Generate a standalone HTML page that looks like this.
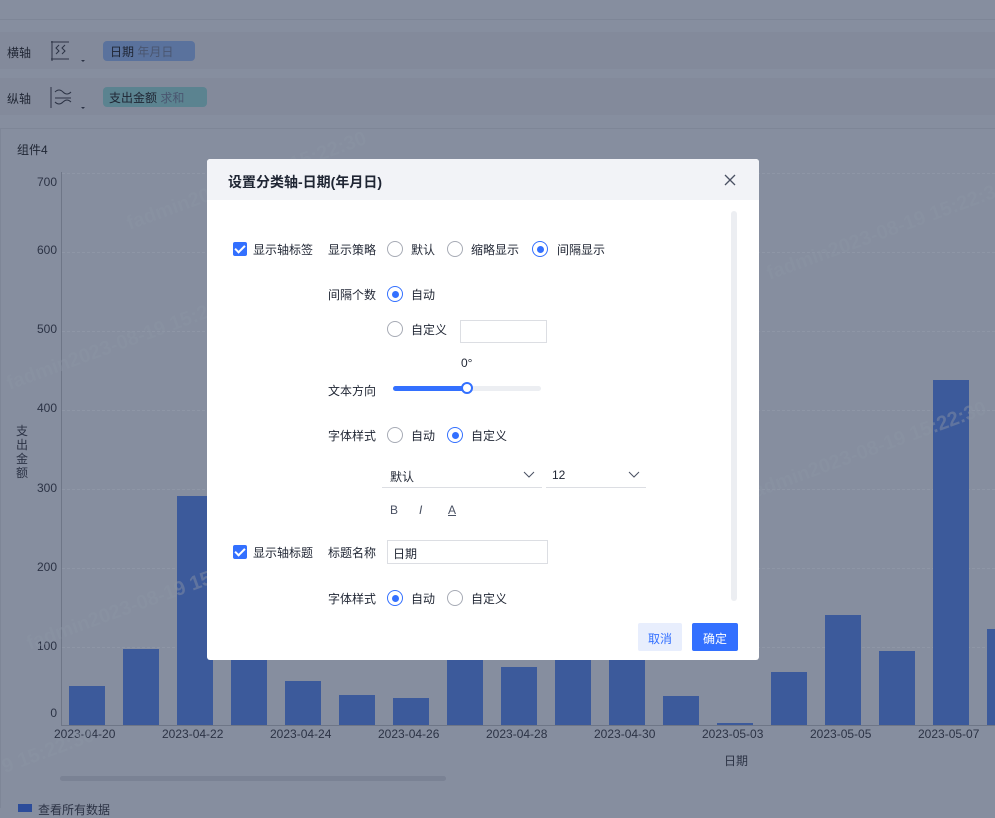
<!DOCTYPE html>
<html><head><meta charset="utf-8"><style>
*{box-sizing:border-box;margin:0;padding:0}
body{width:995px;height:808px;overflow:hidden;background:#868e9f;font-family:"Liberation Sans","Noto Sans CJK SC",sans-serif;font-size:12px;color:#1f2533;position:relative}
.a{position:absolute}
.wm{position:absolute;color:rgba(140,148,165,.45);font-size:20px;font-weight:bold;transform:rotate(-20deg);white-space:nowrap}
.bar{position:absolute;background:#3c5a9b;width:36px;bottom:83px}
.yl{position:absolute;right:938px;color:#2c3345;font-size:12px}
.xl{position:absolute;top:727px;color:#2c3345;font-size:12px}
.grid{position:absolute;left:62px;right:0;border-top:1px dashed #8e96a6}
.dlg{position:absolute;left:207px;top:159px;width:552px;height:501px;background:#fff;border-radius:3px;overflow:hidden}
.hd{height:41px;background:#f2f3f7;padding:13px 0 0 21px;font-size:14px;font-weight:bold;color:#1f2533}
.t{position:absolute;font-size:12px;color:#1f2533;white-space:nowrap}
.r{position:absolute;width:16px;height:16px;border:1px solid #a7abb5;border-radius:50%}
.r.on{border-color:#3370ff}
.r.on:after{content:"";position:absolute;left:3.5px;top:3.5px;width:7px;height:7px;border-radius:50%;background:#3370ff}
.cb{position:absolute;width:14px;height:14px;background:#3370ff;border-radius:2px}
.cb:after{content:"";position:absolute;left:4px;top:1px;width:4px;height:8px;border:solid #fff;border-width:0 2px 2px 0;transform:rotate(45deg)}
</style></head><body>
<div class="a" style="left:0;top:19px;width:995px;height:1px;background:#7e8697"></div>
<div class="a" style="left:0;top:32px;width:995px;height:37px;background:#838a9b"></div>
<div class="a" style="left:0;top:78px;width:995px;height:37px;background:#838a9b"></div>
<div class="t" style="left:7px;top:44px">横轴</div>
<div class="t" style="left:7px;top:90px">纵轴</div>
<svg class="a" style="left:49px;top:40px" width="40" height="28"><path d="M2 2h18M2 19h18M3 1v20M10 5l-3 3 3 3-3 3M16 5l-3 3 3 3-3 3" stroke="#2c3345" fill="none"/><path d="M32 20l2 2 2-2z" fill="#2c3345"/></svg>
<svg class="a" style="left:49px;top:86px" width="40" height="28"><path d="M2 1v21M6 6q4-4 8 0t8 0M6 12h16M6 16q4 4 8 0t8 0" stroke="#2c3345" fill="none"/><path d="M32 21l2 2 2-2z" fill="#2c3345"/></svg>
<div class="a" style="left:103px;top:41px;width:92px;height:20px;background:#5a729d;border-radius:4px;padding:2px 7px;color:#1f2533">日期 <span style="color:#4a5670">年月日</span></div>
<div class="a" style="left:103px;top:87px;width:104px;height:20px;background:#5b8390;border-radius:4px;padding:2px 6px;color:#1f2533">支出金额 <span style="color:#4a5670">求和</span></div>
<div class="a" style="left:0;top:128px;width:995px;height:1px;background:#7e8697"></div>
<div class="a" style="left:0;top:128px;width:1px;height:680px;background:#7e8697"></div>
<div class="t" style="left:17px;top:141px">组件4</div>
<div class="a" style="left:61px;top:172px;width:1px;height:554px;background:#6e7687"></div>
<div class="grid" style="top:173px"></div><div class="grid" style="top:252px"></div><div class="grid" style="top:331px"></div><div class="grid" style="top:410px"></div><div class="grid" style="top:489px"></div><div class="grid" style="top:568px"></div><div class="grid" style="top:647px"></div>
<div class="yl" style="top:175px">700</div><div class="yl" style="top:243px">600</div><div class="yl" style="top:322px">500</div><div class="yl" style="top:401px">400</div><div class="yl" style="top:481px">300</div><div class="yl" style="top:560px">200</div><div class="yl" style="top:639px">100</div><div class="yl" style="top:706px">0</div>
<div class="t" style="left:16px;top:424px;width:14px;line-height:14px;white-space:normal;color:#2c3345">支出金额</div>
<div class="bar" style="left:69px;height:39px"></div>
<div class="bar" style="left:123px;height:76px"></div>
<div class="bar" style="left:177px;height:229px"></div>
<div class="bar" style="left:231px;height:200px"></div>
<div class="bar" style="left:285px;height:44px"></div>
<div class="bar" style="left:339px;height:30px"></div>
<div class="bar" style="left:393px;height:27px"></div>
<div class="bar" style="left:447px;height:200px"></div>
<div class="bar" style="left:501px;height:58px"></div>
<div class="bar" style="left:555px;height:200px"></div>
<div class="bar" style="left:609px;height:200px"></div>
<div class="bar" style="left:663px;height:29px"></div>
<div class="bar" style="left:717px;height:2px"></div>
<div class="bar" style="left:771px;height:53px"></div>
<div class="bar" style="left:825px;height:110px"></div>
<div class="bar" style="left:879px;height:74px"></div>
<div class="bar" style="left:933px;height:345px"></div>
<div class="bar" style="left:987px;height:96px"></div>
<div class="a" style="left:61px;top:725px;width:934px;height:1px;background:#6e7687"></div>
<div class="xl" style="left:54px">2023-04-20</div><div class="xl" style="left:162px">2023-04-22</div><div class="xl" style="left:270px">2023-04-24</div><div class="xl" style="left:378px">2023-04-26</div><div class="xl" style="left:486px">2023-04-28</div><div class="xl" style="left:594px">2023-04-30</div><div class="xl" style="left:702px">2023-05-03</div><div class="xl" style="left:810px">2023-05-05</div><div class="xl" style="left:918px">2023-05-07</div>
<div class="t" style="left:724px;top:752px;color:#2c3345">日期</div>
<div class="a" style="left:60px;top:776px;width:386px;height:5px;background:#7a8294;border-radius:3px"></div>
<div class="a" style="left:18px;top:804px;width:14px;height:8px;background:#2c4c9a"></div>
<div class="t" style="left:38px;top:801px;color:#2c3345">查看所有数据</div>
<div class="wm" style="left:120px;top:170px">fadmin2023-08-19 15:22:30</div>
<div class="wm" style="left:0px;top:330px">fadmin2023-08-19 15:22:30</div>
<div class="wm" style="left:760px;top:220px">fadmin2023-08-19 15:22:30</div>
<div class="wm" style="left:740px;top:440px">fadmin2023-08-19 15:22:30</div>
<div class="wm" style="left:20px;top:590px">fadmin2023-08-19 15:22:30</div>
<div class="wm" style="left:0px;top:740px">9 15:22:30</div>
<div class="dlg">
<div class="hd">设置分类轴-日期(年月日)</div>
<svg class="a" style="left:517px;top:15px" width="12" height="12"><path d="M1 1l10 10M11 1L1 11" stroke="#4a5163" stroke-width="1.3"/></svg>
<div class="a" style="left:524px;top:52px;width:6px;height:390px;background:#eceef2;border-radius:3px"></div>
<div class="cb" style="left:26px;top:83px"></div><div class="t" style="left:46px;top:82px">显示轴标签</div>
<div class="t" style="left:121px;top:82px">显示策略</div>
<div class="r" style="left:180px;top:82px"></div><div class="t" style="left:204px;top:82px">默认</div>
<div class="r" style="left:240px;top:82px"></div><div class="t" style="left:264px;top:82px">缩略显示</div>
<div class="r on" style="left:325px;top:82px"></div><div class="t" style="left:350px;top:82px">间隔显示</div>
<div class="t" style="left:121px;top:127px">间隔个数</div>
<div class="r on" style="left:180px;top:127px"></div><div class="t" style="left:204px;top:127px">自动</div>
<div class="r" style="left:180px;top:162px"></div><div class="t" style="left:204px;top:162px">自定义</div>
<div class="a" style="left:253px;top:161px;width:87px;height:23px;border:1px solid #dcdee3"></div>
<div class="t" style="left:254px;top:197px">0°</div>
<div class="t" style="left:121px;top:223px">文本方向</div>
<div class="a" style="left:186px;top:227px;width:148px;height:5px;background:#eceef2;border-radius:3px"></div>
<div class="a" style="left:186px;top:227px;width:74px;height:5px;background:#3370ff;border-radius:3px"></div>
<div class="a" style="left:254px;top:223px;width:12px;height:12px;border:2px solid #3370ff;border-radius:50%;background:#fff"></div>
<div class="t" style="left:121px;top:268px">字体样式</div>
<div class="r" style="left:180px;top:268px"></div><div class="t" style="left:204px;top:268px">自动</div>
<div class="r on" style="left:240px;top:268px"></div><div class="t" style="left:264px;top:268px">自定义</div>
<div class="a" style="left:175px;top:305px;width:160px;height:24px;border-bottom:1px solid #dcdee3"></div><div class="t" style="left:183px;top:309px">默认</div>
<svg class="a" style="left:316px;top:312px" width="12" height="8"><path d="M1 1l5 5 5-5" stroke="#4a5163" fill="none"/></svg>
<div class="a" style="left:339px;top:305px;width:100px;height:24px;border-bottom:1px solid #dcdee3"></div><div class="t" style="left:345px;top:309px">12</div>
<svg class="a" style="left:421px;top:312px" width="12" height="8"><path d="M1 1l5 5 5-5" stroke="#4a5163" fill="none"/></svg>
<div class="t" style="left:183px;top:344px;font-size:12px;color:#4a5163">B</div>
<div class="t" style="left:212px;top:344px;font-style:italic;color:#4a5163">I</div>
<div class="t" style="left:241px;top:344px;text-decoration:underline;color:#4a5163">A</div>
<div class="cb" style="left:26px;top:386px"></div><div class="t" style="left:46px;top:385px">显示轴标题</div>
<div class="t" style="left:121px;top:385px">标题名称</div>
<div class="a" style="left:180px;top:381px;width:161px;height:24px;border:1px solid #dcdee3;padding:4px 5px">日期</div>
<div class="t" style="left:121px;top:431px">字体样式</div>
<div class="r on" style="left:180px;top:431px"></div><div class="t" style="left:204px;top:431px">自动</div>
<div class="r" style="left:240px;top:431px"></div><div class="t" style="left:264px;top:431px">自定义</div>
<div class="a" style="left:431px;top:464px;width:44px;height:28px;background:#e8eefd;border-radius:2px;color:#3370ff;text-align:center;padding-top:7px">取消</div>
<div class="a" style="left:485px;top:464px;width:46px;height:28px;background:#3370ff;border-radius:2px;color:#fff;text-align:center;padding-top:7px">确定</div>
</div>
</body></html>
